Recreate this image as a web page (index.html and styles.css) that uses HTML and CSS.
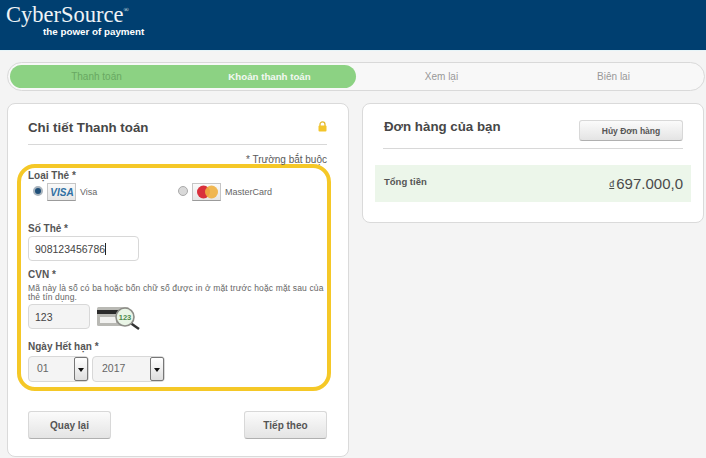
FILE: index.html
```html
<!DOCTYPE html>
<html lang="vi">
<head>
    <meta charset="UTF-8">
    <meta name="viewport" content="width=device-width, initial-scale=1.0">
    <title>Chi tiết Thanh toán</title>
    <link rel="stylesheet" href="styles.css">
</head>
<body>
    <header class="topbar">
        <div class="logo">
            <div class="logo-name">CyberSource<sup class="logo-reg">®</sup></div>
            <div class="logo-tag">the power of payment</div>
        </div>
    </header>

    <nav class="steps">
        <div class="steps-done">
            <span class="step step-past">Thanh toán</span>
            <span class="step step-current">Khoản thanh toán</span>
        </div>
        <span class="step">Xem lại</span>
        <span class="step">Biên lai</span>
    </nav>

    <main class="columns">
        <section class="card card-payment">
            <div class="card-head">
                <h2>Chi tiết Thanh toán</h2>
                <svg class="lock" width="9" height="11" viewBox="0 0 9 11">
                    <path d="M2 5V3.4a2.5 2.5 0 0 1 5 0V5" fill="none" stroke="#e3b92f" stroke-width="1.3"/>
                    <rect x="0.5" y="4.5" width="8" height="6" rx="1" fill="#f3c52b"/>
                </svg>
            </div>
            <p class="required-note">* Trường bắt buộc</p>

            <div class="highlight">
                <div class="field-label">Loại Thẻ *</div>
                <div class="card-types">
                    <div class="card-type card-type-visa">
                        <span class="radio radio-on"></span>
                        <span class="badge">
                            <svg width="28" height="18" viewBox="0 0 28 18">
                                <text x="14" y="12.5" text-anchor="middle" class="visa-mark">VISA</text>
                            </svg>
                        </span>
                        <span class="card-name">Visa</span>
                    </div>
                    <div class="card-type">
                        <span class="radio"></span>
                        <span class="badge">
                            <svg width="28" height="18" viewBox="0 0 28 18">
                                <circle cx="10.5" cy="9" r="6.5" fill="#d9303c"/>
                                <circle cx="18.5" cy="9" r="6.5" fill="#f0b040" opacity="0.9"/>
                            </svg>
                        </span>
                        <span class="card-name">MasterCard</span>
                    </div>
                </div>

                <div class="field-label label-number">Số Thẻ *</div>
                <div class="input input-number">908123456786<span class="caret"></span></div>

                <div class="field-label label-cvn">CVN *</div>
                <p class="help">Mã này là số có ba hoặc bốn chữ số được in ở mặt trước hoặc mặt sau của thẻ tín dụng.</p>
                <div class="cvn-row">
                    <div class="input input-cvn">123</div>
                    <svg class="cvn-icon" width="44" height="24" viewBox="0 0 44 24">
                        <rect x="0" y="1" width="32" height="19" rx="1.5" fill="#b9b9b4"/>
                        <rect x="0" y="4" width="32" height="4" fill="#2b2b2b"/>
                        <rect x="3" y="11" width="16" height="6" fill="#f2f2f0"/>
                        <line x1="32" y1="16" x2="42" y2="23" stroke="#333" stroke-width="2.4"/>
                        <circle cx="28" cy="11" r="9" fill="#e9f5e6" stroke="#8d8d88" stroke-width="1.6"/>
                        <text x="28" y="14" text-anchor="middle" class="cvn-digits">123</text>
                    </svg>
                </div>

                <div class="field-label label-expiry">Ngày Hết hạn *</div>
                <div class="expiry-row">
                    <div class="select select-month"><span class="select-value">01</span><span class="select-arrow"></span></div>
                    <div class="select select-year"><span class="select-value">2017</span><span class="select-arrow"></span></div>
                </div>
            </div>

            <div class="actions">
                <button class="btn">Quay lại</button>
                <button class="btn">Tiếp theo</button>
            </div>
        </section>

        <section class="card card-order">
            <div class="order-head">
                <h2>Đơn hàng của bạn</h2>
                <button class="btn btn-small">Hủy Đơn hàng</button>
            </div>
            <div class="total-row">
                <span class="total-label">Tổng tiền</span>
                <span class="total-value"><span class="currency">đ</span>697.000,0</span>
            </div>
        </section>
    </main>
</body>
</html>
```

FILE: styles.css
```css
* {
    box-sizing: border-box;
}

body {
    margin: 0;
    background-color: #f4f4f4;
    font-family: "Liberation Sans", Arial, sans-serif;
    color: #4a4a4a;
    height: 458px;
    overflow: hidden;
}

h2 {
    margin: 0;
    font-size: 13.3px;
    line-height: 18px;
    color: #474747;
}

.topbar {
    height: 51px;
    background-color: #003f70;
    border-bottom: 1px solid #e6f4f8;
    padding: 3px 0 0 6px;
}

.logo-name {
    font-family: "Liberation Serif", serif;
    font-size: 22.5px;
    line-height: 24px;
    color: #eef3f6;
}

.logo-reg {
    font-size: 7px;
    line-height: 0;
    vertical-align: 10px;
}

.logo-tag {
    font-size: 9.8px;
    font-weight: bold;
    line-height: 9px;
    color: #fff;
    margin-left: 37px;
}

.steps {
    display: grid;
    grid-template-columns: 346px 171px 173px;
    align-items: center;
    margin: 11px 1px 0 7px;
    height: 29px;
    padding: 2px;
    background-color: #f8f8f8;
    border: 1px solid #d9d9d9;
    border-radius: 15px;
}

.steps-done {
    display: grid;
    grid-template-columns: 1fr 1fr;
    align-items: center;
    height: 23px;
    background-color: #8cd283;
    border-radius: 12px;
}

.step {
    font-size: 10px;
    text-align: center;
    color: #999;
}

.step-past {
    color: #69a862;
}

.step-current {
    font-size: 9.7px;
    font-weight: bold;
    color: #f3f8f2;
}

.columns {
    display: flex;
    align-items: flex-start;
    gap: 13px;
    margin: 12px 2px 0 7px;
}

.card {
    width: 342px;
    background-color: #fff;
    border: 1px solid #dadada;
    border-radius: 8px;
}

.card-payment {
    height: 354px;
    padding: 14px 21px 0 20px;
}

.card-head {
    display: flex;
    justify-content: space-between;
    align-items: flex-start;
    height: 27px;
    border-bottom: 1px solid #d8d8d8;
    padding-top: 1px;
}

.lock {
    margin-top: 2px;
}

.required-note {
    margin: 9px 0 0;
    text-align: right;
    font-size: 10px;
    line-height: 12px;
    color: #5a5a5a;
}

.highlight {
    width: 314px;
    height: 227px;
    margin: -2px 0 0 -11px;
    padding: 2px 0 0 7px;
    border: 4px solid #f5c827;
    border-radius: 18px;
}

.field-label {
    font-size: 10px;
    font-weight: bold;
    line-height: 12px;
    color: #555;
}

.card-types {
    display: flex;
    margin: 1px 0 0 5px;
}

.card-type {
    display: flex;
    align-items: center;
    gap: 3px;
    width: 145px;
}

.radio {
    width: 10px;
    height: 10px;
    margin-right: 1px;
    border-radius: 50%;
    border: 1px solid #aaa;
    background-color: #d9d9d9;
    margin-top: -3px;
}

.radio-on {
    border: 2px solid #a9b4bd;
    background-color: #1f4f78;
}

.badge {
    display: block;
    width: 29px;
    height: 18px;
    background: linear-gradient(#fafafa, #e6e6e6);
    border: 1px solid #c6c6c6;
    border-bottom-color: #9b9b9b;
    line-height: 0;
    overflow: hidden;
}

.badge svg {
    margin: -1px 0 0 0;
}

.visa-mark {
    font-family: "Liberation Sans", sans-serif;
    font-size: 10px;
    font-weight: bold;
    font-style: italic;
    fill: #2f6fa3;
}

.card-name {
    font-size: 9px;
    color: #666;
    margin-left: 1px;
}

.label-number {
    margin-top: 22px;
}

.input {
    display: flex;
    align-items: center;
    height: 25px;
    padding-left: 6px;
    font-size: 10.5px;
    color: #444;
    background-color: #fff;
    border: 1px solid #d8d8d8;
    border-radius: 4px;
}

.input-number {
    width: 111px;
    margin-top: 1px;
}

.caret {
    width: 1px;
    height: 12px;
    background-color: #222;
}

.label-cvn {
    margin-top: 8px;
}

.help {
    margin: 3px 0 0;
    width: 302px;
    font-size: 8.5px;
    line-height: 9px;
    letter-spacing: 0.14px;
    color: #666;
}

.cvn-row {
    display: flex;
    align-items: flex-start;
    gap: 7px;
    margin-top: 2px;
}

.input-cvn {
    width: 62px;
    background-color: #f4f4f4;
}

.cvn-icon {
    margin-top: 2px;
}

.cvn-digits {
    font-family: "Liberation Sans", sans-serif;
    font-size: 7.5px;
    font-weight: bold;
    fill: #4a8a4a;
}

.label-expiry {
    margin-top: 11px;
}

.expiry-row {
    display: flex;
    gap: 3px;
    margin-top: 3px;
}

.select {
    display: flex;
    justify-content: space-between;
    height: 26px;
    background-color: #f4f4f4;
    border: 1px solid #d8d8d8;
    border-radius: 4px;
    font-size: 10.5px;
}

.select-month {
    width: 61px;
}

.select-year {
    width: 73px;
}

.select-value {
    line-height: 22px;
    padding-left: 8px;
    color: #666;
}

.select-year .select-value {
    padding-left: 9px;
}

.select-arrow {
    position: relative;
    width: 14px;
    background: linear-gradient(#fff, #dedede);
    border: 1px solid #777;
    border-radius: 2px;
}

.select-arrow::after {
    content: "";
    position: absolute;
    left: 3px;
    top: 10px;
    border-left: 3px solid transparent;
    border-right: 3px solid transparent;
    border-top: 4px solid #111;
}

.actions {
    display: flex;
    justify-content: space-between;
    margin-top: 20px;
}

.btn {
    width: 83px;
    height: 28px;
    padding: 0;
    font-family: "Liberation Sans", Arial, sans-serif;
    font-size: 10px;
    font-weight: bold;
    color: #555;
    background: linear-gradient(#fbfbfb, #e4e4e4);
    border: 1px solid #d8d8d8;
    border-bottom: 1px solid #b0b0b0;
    border-radius: 3px;
}

.card-order {
    height: 120px;
    padding: 14px 12px 0;
}

.order-head {
    display: flex;
    justify-content: space-between;
    align-items: flex-start;
    height: 31px;
    margin: 0 8px;
    border-bottom: 1px solid #d8d8d8;
}

.order-head h2 {
    margin-left: 1px;
}

.btn-small {
    width: 104px;
    height: 21px;
    margin-top: 2px;
    font-size: 8.5px;
}

.total-row {
    display: flex;
    justify-content: space-between;
    align-items: center;
    height: 37px;
    margin-top: 16px;
    padding: 0 8px 0 9px;
    background-color: #ecf6ea;
}

.total-label {
    font-size: 9.5px;
    font-weight: bold;
    color: #555;
    margin-top: -4px;
}

.total-value {
    font-size: 15px;
    color: #4a4a4a;
}

.currency {
    font-size: 9px;
    text-decoration: underline;
    vertical-align: 2px;
    margin-right: 2px;
}
```
